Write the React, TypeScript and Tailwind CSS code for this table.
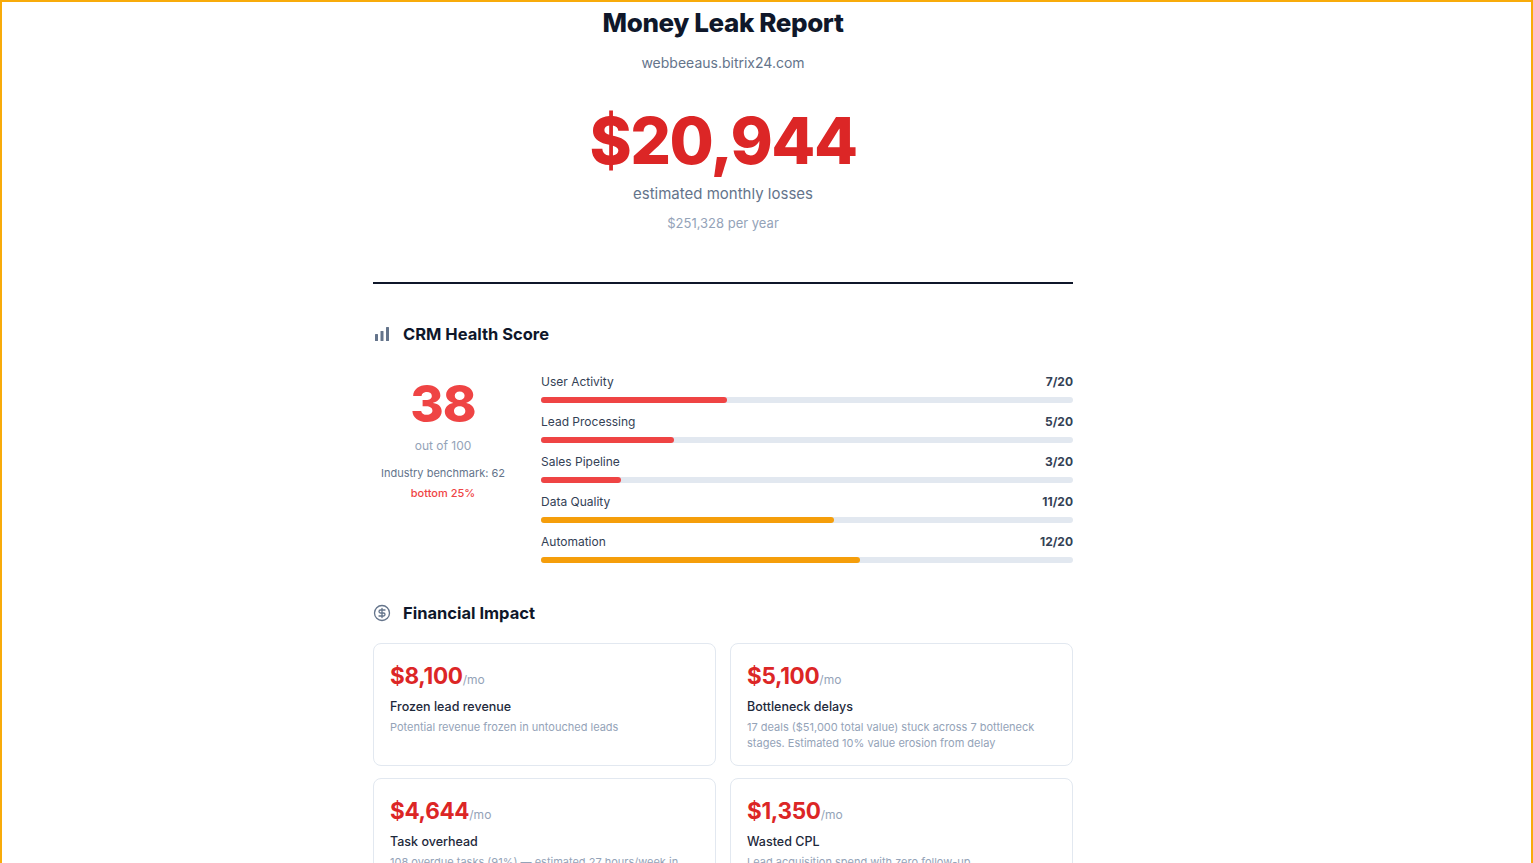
import { CircleDollarSign } from "lucide-react";

type Metric = { label: string; score: number; color: string; width: string };

const metrics: Metric[] = [
  { label: "User Activity", score: 7, color: "bg-[#ef4444]", width: "w-[35%]" },
  { label: "Lead Processing", score: 5, color: "bg-[#ef4444]", width: "w-[25%]" },
  { label: "Sales Pipeline", score: 3, color: "bg-[#ef4444]", width: "w-[15%]" },
  { label: "Data Quality", score: 11, color: "bg-[#f59e0b]", width: "w-[55%]" },
  { label: "Automation", score: 12, color: "bg-[#f59e0b]", width: "w-[60%]" },
];

const impacts = [
  {
    amount: "$8,100",
    title: "Frozen lead revenue",
    text: "Potential revenue frozen in untouched leads",
  },
  {
    amount: "$5,100",
    title: "Bottleneck delays",
    text: "17 deals ($51,000 total value) stuck across 7 bottleneck stages. Estimated 10% value erosion from delay",
  },
  {
    amount: "$4,644",
    title: "Task overhead",
    text: "108 overdue tasks (91%) — estimated 27 hours/week in manual follow-up and rescheduling",
  },
  {
    amount: "$1,350",
    title: "Wasted CPL",
    text: "Lead acquisition spend with zero follow-up",
  },
];

function BarsIcon() {
  return (
    <svg className="h-[18px] w-[18px] text-[#64748b]" viewBox="0 0 18 18" fill="currentColor">
      <rect x="2" y="9" width="3" height="7" rx="0.5" />
      <rect x="7.5" y="6" width="3" height="10" rx="0.5" />
      <rect x="13" y="2" width="3" height="14" rx="0.5" />
    </svg>
  );
}

function SectionTitle({ icon, children }: { icon: React.ReactNode; children: React.ReactNode }) {
  return (
    <h2 className="flex items-center gap-3 text-[16.5px] leading-7 font-bold text-[#0f172a]">
      {icon}
      {children}
    </h2>
  );
}

export default function App() {
  return (
    <div className="min-h-[1100px] border-2 border-[#f8ab0a] bg-white font-['Inter',sans-serif]">
      <div className="ml-[371px] w-[700px] pt-[5px] pb-10">
        <header className="flex flex-col items-center text-center">
          <h1 className="text-[26px] leading-8 font-extrabold tracking-[-0.4px] text-[#0f172a]">
            Money Leak Report
          </h1>
          <p className="mt-[14px] text-sm leading-5 text-[#64748b]">webbeeaus.bitrix24.com</p>
          <p className="mt-[36px] text-[64px] leading-none font-extrabold tracking-[-1.5px] text-[#dc2626]">
            $20,944
          </p>
          <p className="mt-[9px] text-[15px] leading-6 text-[#64748b]">estimated monthly losses</p>
          <p className="mt-[7px] text-[13px] leading-5 text-[#94a3b8]">$251,328 per year</p>
        </header>

        <hr className="mt-[49px] border-t-2 border-[#0f172a]" />

        <section className="mt-[36px]">
          <SectionTitle icon={<BarsIcon />}>CRM Health Score</SectionTitle>
          <div className="mt-[25px] flex gap-7">
            <div className="flex w-[140px] shrink-0 flex-col items-center pt-[5px] text-center">
              <span className="text-[51px] leading-none font-extrabold tracking-[-1px] text-[#ef4444]">38</span>
              <span className="mt-[8px] text-xs leading-[18px] text-[#94a3b8]">out of 100</span>
              <span className="mt-[10px] text-[11px] leading-4 text-[#64748b]">Industry benchmark: 62</span>
              <span className="mt-1 text-[11px] leading-4 font-medium text-[#ef4444]">bottom 25%</span>
            </div>
            <div className="flex flex-1 flex-col gap-[10px]">
              {metrics.map((m) => (
                <div key={m.label}>
                  <div className="flex items-center justify-between text-xs leading-[18px] text-[#334155]">
                    <span>{m.label}</span>
                    <span className="font-bold">{m.score}/20</span>
                  </div>
                  <div className="mt-[6px] h-[6px] w-full rounded-full bg-[#e2e8f0]">
                    <div className={`h-full rounded-full ${m.color} ${m.width}`} />
                  </div>
                </div>
              ))}
            </div>
          </div>
        </section>

        <section className="mt-[36px]">
          <SectionTitle icon={<CircleDollarSign className="h-[18px] w-[18px] text-[#64748b]" strokeWidth={1.75} />}>
            Financial Impact
          </SectionTitle>
          <div className="mt-[16px] grid grid-cols-2 gap-x-[14px] gap-y-[12px]">
            {impacts.map((c) => (
              <div key={c.title} className="rounded-lg border border-[#e2e8f0] px-4 pt-4 pb-[14px]">
                <p className="leading-8">
                  <span className="text-[22.5px] font-bold tracking-[-0.3px] text-[#dc2626]">{c.amount}</span>
                  <span className="text-xs text-[#94a3b8]">/mo</span>
                </p>
                <p className="mt-[3px] text-[12.5px] leading-5 font-medium text-[#1e293b]">{c.title}</p>
                <p className="mt-[2px] text-[11px] leading-4 text-[#94a3b8]">{c.text}</p>
              </div>
            ))}
          </div>
        </section>
      </div>
    </div>
  );
}
